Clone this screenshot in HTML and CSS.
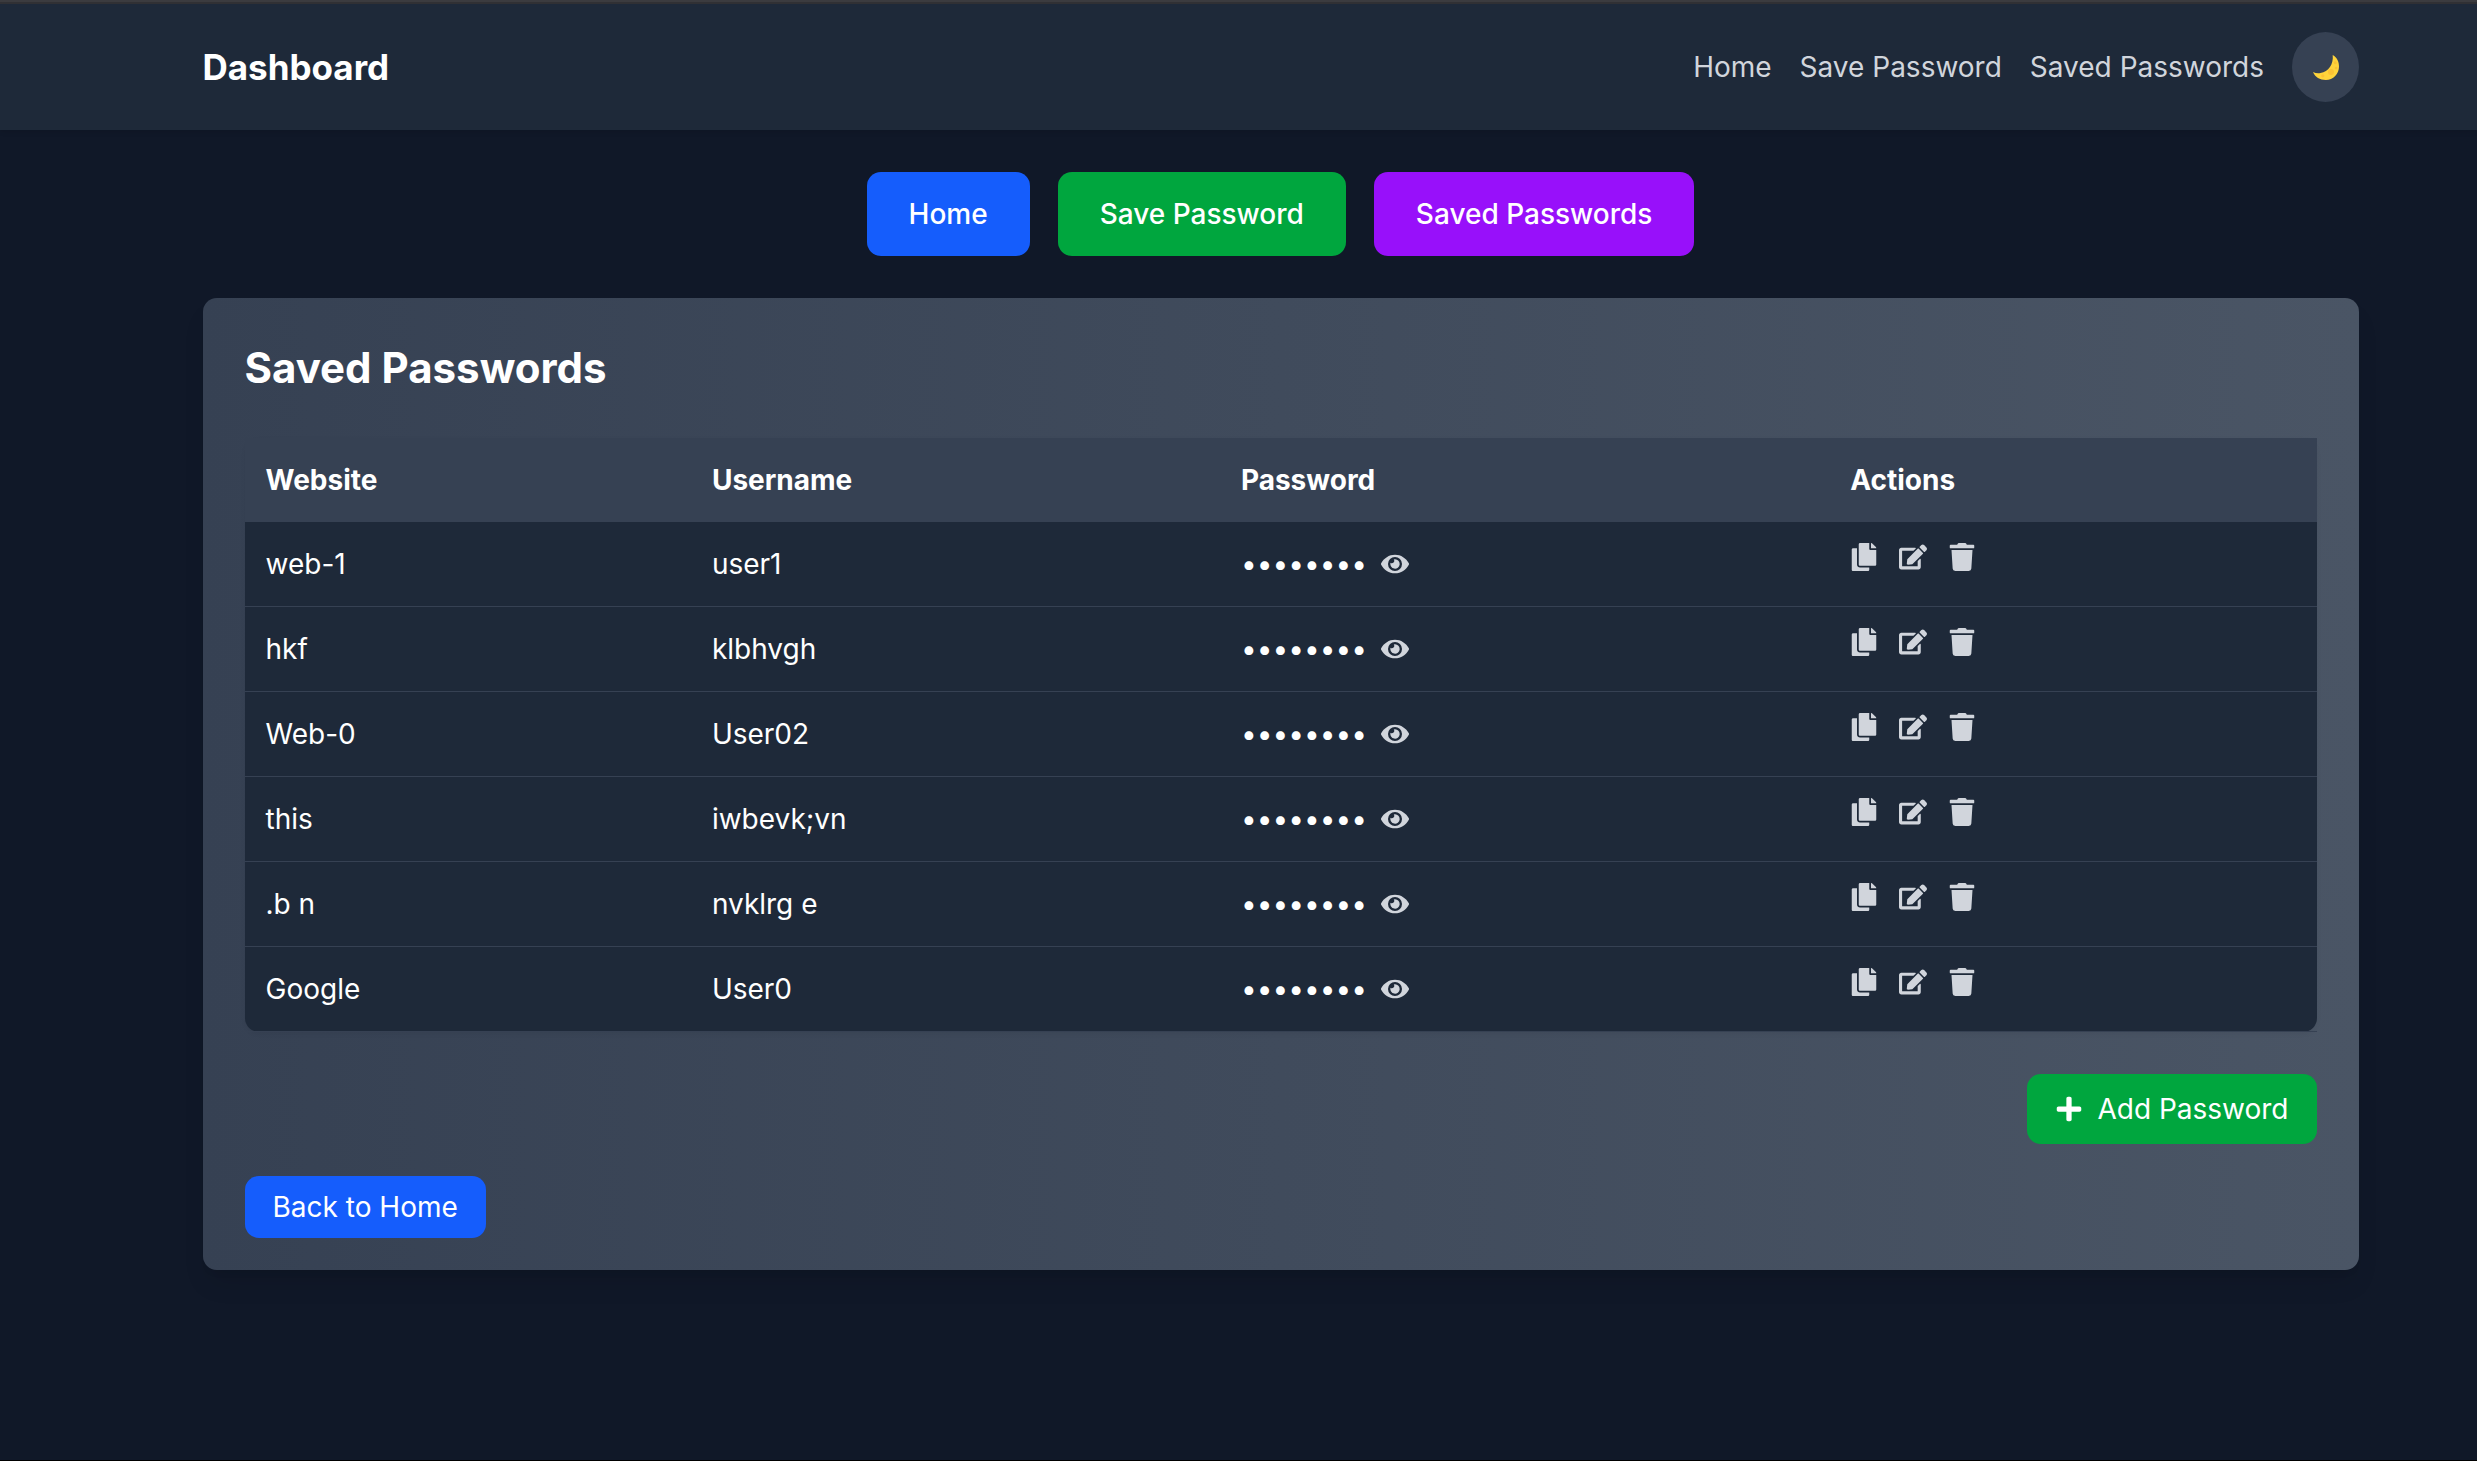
FILE: index.html
```html
<!DOCTYPE html>
<html lang="en">
<head>
<meta charset="utf-8">
<title>Saved Passwords</title>
<link rel="stylesheet" href="styles.css">
</head>
<body>
<svg class="sprite" aria-hidden="true">
  <symbol id="copy" viewBox="0 0 448 512"><path d="M320 448v40c0 13.255-10.745 24-24 24H24c-13.255 0-24-10.745-24-24V120c0-13.255 10.745-24 24-24h72v296c0 30.879 25.121 56 56 56h168zm0-344V0H152c-13.255 0-24 10.745-24 24v368c0 13.255 10.745 24 24 24h272c13.255 0 24-10.745 24-24V128H344c-13.2 0-24-10.8-24-24zm120.971-31.029L375.029 7.029A24 24 0 0 0 358.059 0H352v96h96v-6.059a24 24 0 0 0-7.029-16.97z"/></symbol>
  <symbol id="edit" viewBox="0 0 576 512"><path d="M402.6 83.2l90.2 90.2c3.8 3.8 3.8 10 0 13.8L274.4 405.6l-92.8 10.3c-12.4 1.4-22.9-9.1-21.5-21.5l10.3-92.8L388.8 83.2c3.8-3.8 10-3.8 13.8 0zm162-22.9l-48.8-48.8c-15.2-15.2-39.9-15.2-55.2 0l-35.4 35.4c-3.8 3.8-3.8 10 0 13.8l90.2 90.2c3.8 3.8 10 3.8 13.8 0l35.4-35.4c15.2-15.3 15.2-40 0-55.2zM384 346.2V448H64V128h229.8c3.2 0 6.2-1.3 8.5-3.5l40-40c7.6-7.6 2.2-20.5-8.5-20.5H48C21.5 64 0 85.5 0 112v352c0 26.5 21.5 48 48 48h352c26.5 0 48-21.5 48-48V306.2c0-10.7-12.9-16-20.5-8.5l-40 40c-2.2 2.3-3.5 5.3-3.5 8.5z"/></symbol>
  <symbol id="trash" viewBox="0 0 448 512"><path d="M432 32H312l-9.4-18.7A24 24 0 0 0 281.1 0H166.8a23.72 23.72 0 0 0-21.4 13.3L136 32H16A16 16 0 0 0 0 48v32a16 16 0 0 0 16 16h416a16 16 0 0 0 16-16V48a16 16 0 0 0-16-16zM53.2 467a48 48 0 0 0 47.9 45h245.8a48 48 0 0 0 47.9-45L416 128H32z"/></symbol>
  <symbol id="eye" viewBox="0 0 576 512"><path d="M572.52 241.4C518.29 135.59 410.93 64 288 64S57.68 135.64 3.48 241.41a32.35 32.35 0 0 0 0 29.19C57.71 376.41 165.07 448 288 448s230.32-71.64 284.52-177.41a32.35 32.35 0 0 0 0-29.19zM288 400a144 144 0 1 1 144-144 143.93 143.93 0 0 1-144 144zm0-240a95.31 95.31 0 0 0-25.31 3.79 47.85 47.85 0 0 1-66.9 66.9A95.78 95.78 0 1 0 288 160z"/></symbol>
  <symbol id="plus" viewBox="0 0 448 512"><path d="M416 208H272V64c0-17.67-14.33-32-32-32h-32c-17.67 0-32 14.33-32 32v144H32c-17.67 0-32 14.33-32 32v32c0 17.67 14.33 32 32 32h144v144c0 17.67 14.33 32 32 32h32c17.67 0 32-14.33 32-32V304h144c17.67 0 32-14.33 32-32v-32c0-17.67-14.33-32-32-32z"/></symbol>
</svg>

<header class="navbar">
  <div class="brand">Dashboard</div>
  <nav class="links">
    <a>Home</a><a>Save Password</a><a>Saved Passwords</a>
    <button class="theme" aria-label="Toggle theme">
      <svg class="moon" viewBox="0 0 26 25"><path fill="#ffd43b" d="M19.7 0C24.2 2.6 26 6.8 26 11.5C26 19 20.3 25 12.8 25C7 25 2 22.2 0 17C2.500 18.200 4.800 18.500 7.500 18C15.500 16.500 20.700 9.500 19.700 0Z"/><g fill="#fcc234"><circle cx="18" cy="17" r="3"/><circle cx="9.800" cy="20.800" r="1.600"/><circle cx="23" cy="13" r="1.300"/><circle cx="22.300" cy="7.800" r="1.500"/></g></svg>
    </button>
  </nav>
</header>

<main class="page">
  <div class="tabs">
    <button class="tab blue">Home</button>
    <button class="tab green">Save Password</button>
    <button class="tab purple">Saved Passwords</button>
  </div>
  <section class="panel">
    <h1>Saved Passwords</h1>
    <table>
      <colgroup><col class="c-site"><col class="c-user"><col class="c-pass"><col></colgroup>
      <thead><tr><th>Website</th><th>Username</th><th>Password</th><th>Actions</th></tr></thead>
      <tbody>
        <tr><td>web-1</td><td>user1</td><td><div class="secret"><span>••••••••</span><svg class="icon"><use href="#eye"/></svg></div></td><td><div class="actions"><svg class="icon"><use href="#copy"/></svg><svg class="icon"><use href="#edit"/></svg><svg class="icon"><use href="#trash"/></svg></div></td></tr>
        <tr><td>hkf</td><td>klbhvgh</td><td><div class="secret"><span>••••••••</span><svg class="icon"><use href="#eye"/></svg></div></td><td><div class="actions"><svg class="icon"><use href="#copy"/></svg><svg class="icon"><use href="#edit"/></svg><svg class="icon"><use href="#trash"/></svg></div></td></tr>
        <tr><td>Web-0</td><td>User02</td><td><div class="secret"><span>••••••••</span><svg class="icon"><use href="#eye"/></svg></div></td><td><div class="actions"><svg class="icon"><use href="#copy"/></svg><svg class="icon"><use href="#edit"/></svg><svg class="icon"><use href="#trash"/></svg></div></td></tr>
        <tr><td>this</td><td>iwbevk;vn</td><td><div class="secret"><span>••••••••</span><svg class="icon"><use href="#eye"/></svg></div></td><td><div class="actions"><svg class="icon"><use href="#copy"/></svg><svg class="icon"><use href="#edit"/></svg><svg class="icon"><use href="#trash"/></svg></div></td></tr>
        <tr><td>.b n</td><td>nvklrg e</td><td><div class="secret"><span>••••••••</span><svg class="icon"><use href="#eye"/></svg></div></td><td><div class="actions"><svg class="icon"><use href="#copy"/></svg><svg class="icon"><use href="#edit"/></svg><svg class="icon"><use href="#trash"/></svg></div></td></tr>
        <tr><td>Google</td><td>User0</td><td><div class="secret"><span>••••••••</span><svg class="icon"><use href="#eye"/></svg></div></td><td><div class="actions"><svg class="icon"><use href="#copy"/></svg><svg class="icon"><use href="#edit"/></svg><svg class="icon"><use href="#trash"/></svg></div></td></tr>
      </tbody>
    </table>
    <button class="add green"><svg class="icon"><use href="#plus"/></svg>Add Password</button>
    <button class="back blue">Back to Home</button>
  </section>
</main>
</body>
</html>
```
FILE: styles.css
```css
* { box-sizing: border-box; }

body {
  margin: 0;
  height: 1461px;
  overflow: hidden;
  background: #101828;
  border-top: 2px solid #3b3b3f;
  border-bottom: 1px solid #000;
  color: #fff;
  font: 28px/42px Inter, sans-serif;
}

.sprite { display: none; }

button {
  border: 0;
  padding: 0;
  color: #fff;
  font: inherit;
}

.icon {
  display: block;
  flex: none;
  width: 28px;
  height: 28px;
  fill: #d1d5dc;
}

.navbar {
  display: flex;
  align-items: center;
  justify-content: space-between;
  height: 128px;
  padding: 0 118px 0 202.5px;
  border-top: 2px solid #303034;
  background: #1e2939;
  box-shadow: 0 2px 5px rgba(0, 0, 0, .1);
}

.brand { font-size: 35px; font-weight: 700; }

.links {
  display: flex;
  align-items: center;
  gap: 28px;
  color: #d1d5dc;
}

.theme {
  display: flex;
  align-items: center;
  justify-content: center;
  width: 67px;
  height: 70px;
  border-radius: 50%;
  background: #364153;
}

.moon { width: 26px; height: 25px; }

.page {
  width: 2156px;
  margin-left: 202.5px;
  padding-top: 42px;
}

.tabs {
  display: flex;
  justify-content: center;
  gap: 28px;
  margin-bottom: 42px;
}

.tab {
  padding: 21px 42px;
  border-radius: 14px;
  font-weight: 500;
}

.blue { background: #155dfc; }
.green { background: #00a63e; }
.purple { background: #9810fa; }

.panel {
  display: flex;
  flex-direction: column;
  height: 972px;
  padding: 42px 42px 32px;
  border-radius: 14px;
  background: linear-gradient(to right, #364153, #4a5565);
  box-shadow: 0 17px 26px -5px rgba(0, 0, 0, .1), 0 7px 10px -7px rgba(0, 0, 0, .1);
}

h1 {
  margin: 0 0 42px;
  font-size: 42px;
  line-height: 56px;
  font-weight: 700;
}

table {
  width: 100%;
  table-layout: fixed;
  border-collapse: separate;
  border-spacing: 0;
  border-radius: 14px;
  background: #1e2939;
  box-shadow: 0 2px 5px rgba(0, 0, 0, .05);
}

.c-site { width: 446.4px; }
.c-user { width: 529px; }
.c-pass { width: 609.4px; }

th {
  padding: 21px;
  background: #364153;
  text-align: left;
  font-weight: 700;
}

td {
  height: 85px;
  padding: 21px;
  border-bottom: 1px solid #364153;
  vertical-align: top;
}

.secret {
  display: flex;
  align-items: center;
  gap: 14px;
}

.actions { display: flex; gap: 21px; }

.add {
  display: flex;
  align-items: center;
  align-self: flex-end;
  gap: 14px;
  margin-top: 42px;
  padding: 14px 28px;
  border-radius: 14px;
}

.add .icon { fill: #fff; }

.back {
  flex: none;
  align-self: flex-start;
  height: 62px;
  margin-top: 32px;
  padding: 0 28px;
  border-radius: 14px;
}
```
